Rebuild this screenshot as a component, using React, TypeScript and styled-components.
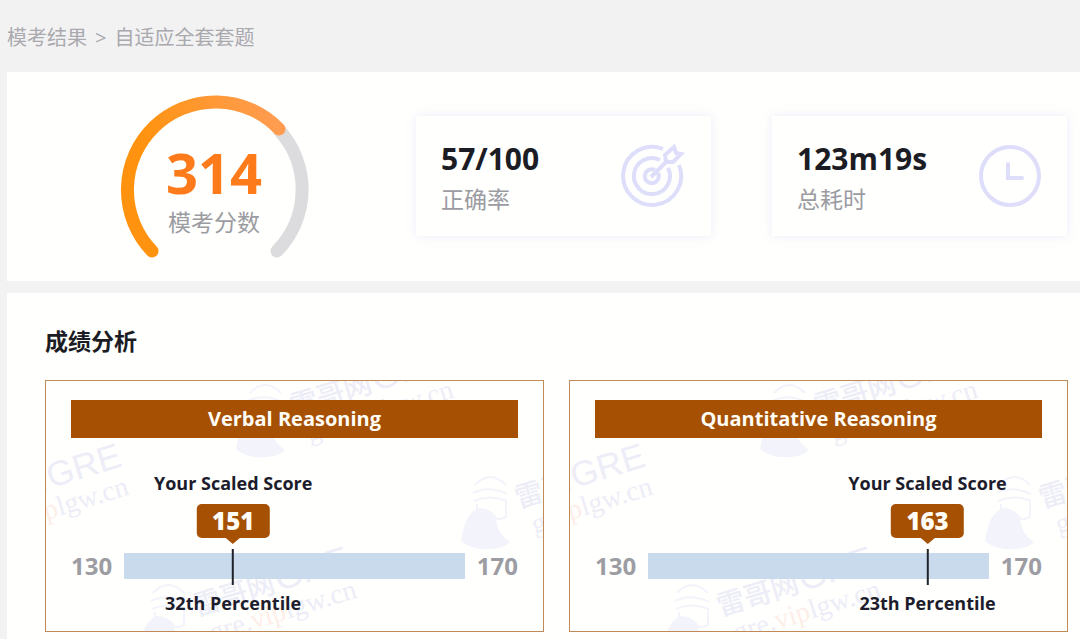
import React, { useId } from 'react';
import styled, { createGlobalStyle } from 'styled-components';

const GlobalStyle = createGlobalStyle`
  * { box-sizing: border-box; }
  body {
    margin: 0;
    background: #f2f2f3;
    color: #1c1c24;
    font-family: 'Open Sans', 'Noto Sans CJK SC', sans-serif;
  }
  h1, h2, h3, p, ol { margin: 0; padding: 0; }
`;

const Page = styled.div`
  display: flex;
  flex-direction: column;
  min-height: 100vh;
  padding-left: 7px;
`;

const Breadcrumb = styled.nav`
  padding: 23px 0 19px;
`;

const Trail = styled.ol`
  display: flex;
  gap: 8px;
  list-style: none;
  font-size: 20px;
  line-height: 30px;
  color: #a9a9ae;
`;

const TrailLink = styled.a`
  color: inherit;
  text-decoration: none;
`;

const Summary = styled.section`
  display: flex;
  align-items: flex-start;
  padding: 22px 13px 19px 112px;
  background: #fffffd;
`;

const GaugeBox = styled.div`
  display: grid;
  flex: none;
  width: 190px;
  height: 168px;
  margin-right: 107px;

  > * { grid-area: 1 / 1; }
`;

const GaugeLabel = styled.div`
  display: flex;
  flex-direction: column;
  align-items: center;
  padding-top: 46px;
`;

const GaugeScore = styled.strong`
  font-size: 56px;
  line-height: 64px;
  font-weight: 700;
  color: #fd7b1a;
`;

const Caption = styled.p`
  font-size: 23px;
  line-height: 36px;
  color: #9b9ba2;
`;

const Stats = styled.div`
  display: flex;
  flex: 1;
  gap: 61px;
  padding-top: 22px;
`;

const StatCard = styled.article`
  display: flex;
  flex: 1;
  align-items: center;
  justify-content: space-between;
  height: 120px;
  padding: 0 25px;
  background: #fffffe;
  box-shadow: 0 0 10px rgba(205, 210, 250, 0.4);
`;

const StatText = styled.div`
  padding-top: 2px;
`;

const StatValue = styled.p`
  font-size: 30px;
  line-height: 44px;
  font-weight: 700;
`;

const Icon = styled.svg`
  flex: none;
  width: 66px;
  height: 66px;
  fill: none;
  stroke: #dedefa;
  stroke-width: 4;
`;

const Analysis = styled.section`
  flex: 1;
  margin-top: 12px;
  padding: 31px 12px 7px 38px;
  background: #fffffd;
`;

const Title = styled.h2`
  font-size: 23px;
  line-height: 34px;
  font-weight: 700;
`;

const Panels = styled.div`
  display: grid;
  grid-template-columns: 1fr 1fr;
  gap: 25px;
  margin-top: 22px;
`;

const Panel = styled.article`
  display: grid;
  height: 252px;
  border: 1px solid #c08a58;
  overflow: hidden;

  > * { grid-area: 1 / 1; min-width: 0; }
`;

const PanelBody = styled.div`
  padding: 19px 25px;
`;

const PanelTitle = styled.h3`
  background: #a65003;
  color: #fffdf6;
  font-size: 20px;
  line-height: 38px;
  font-weight: 700;
  text-align: center;
`;

const Scale = styled.div`
  display: flex;
  align-items: center;
  justify-content: space-between;
  gap: 12px;
  margin-top: 111px;
  font-size: 24px;
  line-height: 34px;
  font-weight: 700;
  color: #9c9ca3;
`;

const Track = styled.div`
  position: relative;
  flex: 1;
  height: 26px;
  background: #c8daec;
`;

const Marker = styled.div<{ $at: number }>`
  position: absolute;
  top: -83px;
  left: ${({ $at }) => $at}%;
  display: flex;
  flex-direction: column;
  align-items: center;
  transform: translateX(-50%);
  white-space: nowrap;
  font-size: 18px;
  line-height: 26px;
  color: #1c1c2c;
`;

const Badge = styled.strong`
  margin-top: 8px;
  width: 73px;
  border-radius: 5px;
  background: #a65003;
  color: #fffdf6;
  font-size: 24px;
  line-height: 34px;
  text-align: center;
`;

const BadgeTip = styled.span`
  border: 7px solid transparent;
  border-top: 6px solid #a65003;
  border-bottom: 0;
`;

const Needle = styled.span`
  width: 2px;
  height: 36px;
  margin: 5px 0;
  background: #20232b;
`;

const WatermarkSvg = styled.svg`
  width: 100%;
  height: 100%;
`;

const marks = [
  { x: 257, y: 22 },
  { x: -68, y: 119 },
  { x: 482, y: 114 },
  { x: 160, y: 222 },
];

function Watermark() {
  return (
    <WatermarkSvg aria-hidden="true">
      {marks.map(({ x, y }) => (
        <g key={x} transform={`translate(${x} ${y})`}>
          <path d="M-67 46L-65 36L-62 26Q-57 16-49 13Q-40 13-33 20L-31 29Q-29 40-18 47Q-23 53-37 54Q-55 56-67 46Z" fill="#f3f3fb" />
          <g fill="none" stroke="#f3f3fb" strokeWidth="2">
            <path d="M-53-10Q-38-26-22-10M-55-2Q-39-10-21-1M-54 6Q-38-1-21 6M-51 9V16M-22 7V22Q-30 26-34 22" />
          </g>
          <g transform="rotate(-17)" fill="#ededf8">
            <text x="-13" y="10" fontSize="28" fontWeight="500" fontFamily="Noto Sans CJK SC, sans-serif">雷哥网</text>
            <text x="73" y="10" fontSize="35" fontFamily="Liberation Sans, sans-serif">GRE</text>
            <text x="-5" y="39" fontSize="28" fontFamily="Liberation Serif, serif">
              gre.<tspan fill="#fdeee9">vip</tspan>lgw.cn
            </text>
          </g>
        </g>
      ))}
    </WatermarkSvg>
  );
}

function Gauge() {
  const id = useId();
  return (
    <svg width="190" height="168" viewBox="0 0 190 168" fill="none" strokeWidth="13" strokeLinecap="round" aria-hidden="true">
      <defs>
        <linearGradient id={id} gradientUnits="userSpaceOnUse" x1="40" y1="80" x2="160" y2="30">
          <stop offset="0" stopColor="#ff930f" />
          <stop offset="1" stopColor="#ff9c50" />
        </linearGradient>
      </defs>
      <path d="M160 36A88 88 0 0 1 158 157" stroke="#dcdcde" />
      <path d="M33 157A88 88 0 1 1 160 35" stroke={`url(#${id})`} />
    </svg>
  );
}

function TargetIcon() {
  return (
    <Icon viewBox="0 0 66 66" aria-hidden="true">
      <path d="M43 6A29 29 0 1 0 59 22" />
      <path d="M40 17A18 18 0 1 0 48 25" />
      <path d="M35 27A7 7 0 1 0 38 30" />
      <path d="M31 34L46 19" />
      <path d="M46 19L45 12L54 4L56 10L61 11L53 19Z" />
    </Icon>
  );
}

function ClockIcon() {
  return (
    <Icon viewBox="0 0 66 66" aria-hidden="true">
      <circle cx="34" cy="33" r="29" />
      <path d="M32 21V35H46" strokeLinecap="round" />
    </Icon>
  );
}

interface StatProps {
  value: string;
  label: string;
  icon: React.ReactNode;
}

function Stat({ value, label, icon }: StatProps) {
  return (
    <StatCard>
      <StatText>
        <StatValue>{value}</StatValue>
        <Caption>{label}</Caption>
      </StatText>
      {icon}
    </StatCard>
  );
}

interface ScorePanelProps {
  title: string;
  score: number;
  percentile: string;
  at: number;
}

function ScorePanel({ title, score, percentile, at }: ScorePanelProps) {
  return (
    <Panel>
      <Watermark />
      <PanelBody>
        <PanelTitle>{title}</PanelTitle>
        <Scale>
          <span>130</span>
          <Track>
            <Marker $at={at}>
              <span>Your Scaled Score</span>
              <Badge>{score}</Badge>
              <BadgeTip />
              <Needle />
              <span>{percentile} Percentile</span>
            </Marker>
          </Track>
          <span>170</span>
        </Scale>
      </PanelBody>
    </Panel>
  );
}

export default function App() {
  return (
    <>
      <GlobalStyle />
      <Page>
        <Breadcrumb>
          <Trail>
            <li><TrailLink href="#results">模考结果</TrailLink></li>
            <li aria-hidden="true">&gt;</li>
            <li>自适应全套套题</li>
          </Trail>
        </Breadcrumb>
        <Summary>
          <GaugeBox>
            <Gauge />
            <GaugeLabel>
              <GaugeScore>314</GaugeScore>
              <Caption>模考分数</Caption>
            </GaugeLabel>
          </GaugeBox>
          <Stats>
            <Stat value="57/100" label="正确率" icon={<TargetIcon />} />
            <Stat value="123m19s" label="总耗时" icon={<ClockIcon />} />
          </Stats>
        </Summary>
        <Analysis>
          <Title>成绩分析</Title>
          <Panels>
            <ScorePanel title="Verbal Reasoning" score={151} percentile="32th" at={32} />
            <ScorePanel title="Quantitative Reasoning" score={163} percentile="23th" at={82} />
          </Panels>
        </Analysis>
      </Page>
    </>
  );
}
